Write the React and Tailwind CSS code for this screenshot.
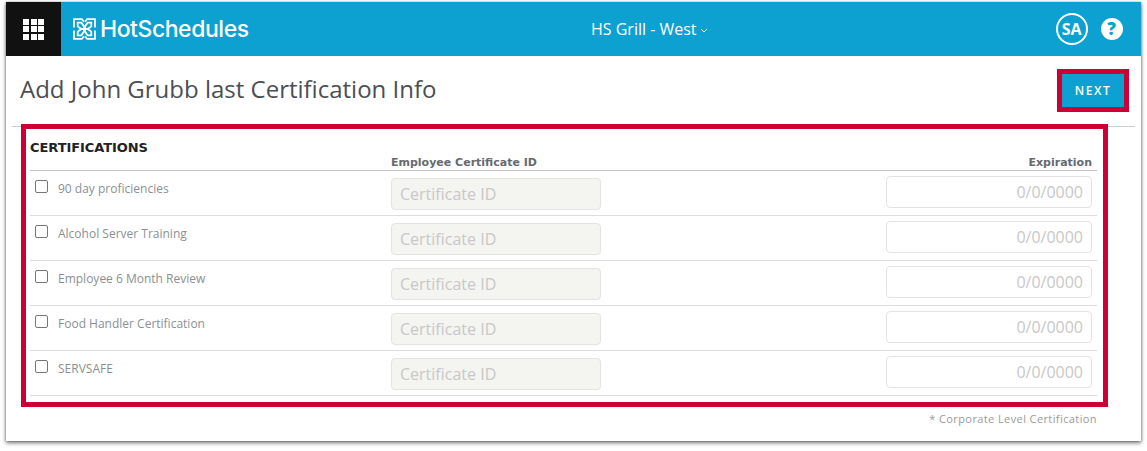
const certs = ['90 day proficiencies', 'Alcohol Server Training', 'Employee 6 Month Review', 'Food Handler Certification', 'SERVSAFE']

function LogoQuarter({ transform }) {
  return (
    <g transform={transform}>
      <path d="M1 9V1h7.5l2 2.5" />
      <path d="M4.5 4.5h3.5l2.5 3.5v2.5H8L4.5 8z" />
    </g>
  )
}

function Logo() {
  return (
    <svg width="23" height="22" viewBox="0 0 22 21" fill="none" stroke="white" strokeWidth="1.7" className="shrink-0">
      <LogoQuarter transform="" />
      <LogoQuarter transform="translate(22 0) scale(-1 1)" />
      <LogoQuarter transform="translate(0 21) scale(1 -1)" />
      <LogoQuarter transform="translate(22 21) scale(-1 -1)" />
    </svg>
  )
}

function CertRow({ name }) {
  return (
    <div className="flex h-[45px] border-b border-[#dddddd]">
      <input type="checkbox" className="appearance-none w-[13px] h-[13px] ml-[5px] mt-[9px] border border-[#767676] rounded-[2px] bg-white shrink-0" />
      <div className="w-[333px] ml-[10px] mt-[9px] text-[12px] leading-[17px] text-[#8b8f94]">{name}</div>
      <input disabled placeholder="Certificate ID" className="w-[210px] h-[32px] mt-[7px] px-[8px] bg-[#f4f4f1] border border-[#e3e3e3] rounded-[4px] text-[16px] placeholder:text-[#c8c8c8]" />
      <input disabled placeholder="0/0/0000" className="w-[206px] h-[32px] mt-[5px] ml-[285px] px-[8px] text-right bg-white border border-[#e3e3e3] rounded-[4px] text-[16px] placeholder:text-[#c8c8c8]" />
    </div>
  )
}

export default function App() {
  return (
    <div className="h-[451px] bg-white pt-[2px] pl-[6px] font-['Open_Sans',sans-serif]">
      <div className="w-[1135px] h-[439px] bg-white shadow-[0_2px_4px_rgba(0,0,0,0.55),-1px_0_2px_rgba(0,0,0,0.15),1px_0_2px_rgba(0,0,0,0.15)]">
        <header className="flex items-center h-[54px] bg-[#0ca1d0] text-white">
          <div className="flex items-center justify-center w-[55px] h-full bg-[#111111]">
            <div className="grid grid-cols-3 gap-[1.5px]">
              {Array.from({ length: 9 }).map((_, i) => <div key={i} className="w-[6px] h-[6px] bg-white" />)}
            </div>
          </div>
          <div className="flex items-center gap-[4px] w-[530px] pl-[12px]">
            <Logo />
            <span className="font-['Inter',sans-serif] font-medium text-[23px] tracking-[-0.45px]">HotSchedules</span>
          </div>
          <div className="flex items-center gap-[3px] text-[16px]">
            HS Grill - West
            <svg width="8" height="5" viewBox="0 0 8 5" fill="none" stroke="white" className="mt-[3px]"><path d="M1 1l3 3 3-3" /></svg>
          </div>
          <div className="flex items-center justify-center w-[32px] h-[32px] ml-[348px] rounded-full border-2 border-white font-bold text-[16px]">SA</div>
          <div className="flex items-center justify-center w-[22px] h-[22px] ml-[13px] rounded-full bg-white text-[#0ca1d0] font-extrabold text-[17px]">?</div>
        </header>

        <div className="flex items-center justify-between h-[71px] pl-[8px] pr-[11px] pb-[1px] border-b border-[#cccccc] mx-[6px]">
          <h1 className="text-[24px] text-[#4b4f54] -mt-[4px]">Add John Grubb last Certification Info</h1>
          <div className="relative">
            <button className="block w-[62px] h-[33px] bg-[#0ca1d0] text-white text-[12px] font-semibold tracking-[1.5px]">NEXT</button>
            <div className="absolute -inset-[5px] border-[5px] border-[#cc0033]" />
          </div>
        </div>

        <section className="relative ml-[24px] mr-[44px]">
          <h2 className="pt-[12px] text-[13px] leading-[18px] tracking-[-0.07px] font-bold font-['DejaVu_Sans',sans-serif] text-[#222222]">CERTIFICATIONS</h2>
          <div className="flex justify-between h-[14px] pl-[361px] pr-[5px] border-b border-[#c4c4c4] text-[11px] leading-[12px] font-bold font-['DejaVu_Sans',sans-serif] text-[#666a70]">
            <span>Employee Certificate ID</span>
            <span>Expiration</span>
          </div>
          {certs.map((c) => <CertRow key={c} name={c} />)}
          <div className="absolute -top-[3px] -left-[9px] -right-[11px] h-[283px] border-[5px] border-[#cc0033] pointer-events-none" />
        </section>

        <p className="mt-[15px] pr-[44px] text-right text-[11px] leading-[15px] tracking-[0.4px] text-[#9a9a9a]">* Corporate Level Certification</p>
      </div>
    </div>
  )
}
